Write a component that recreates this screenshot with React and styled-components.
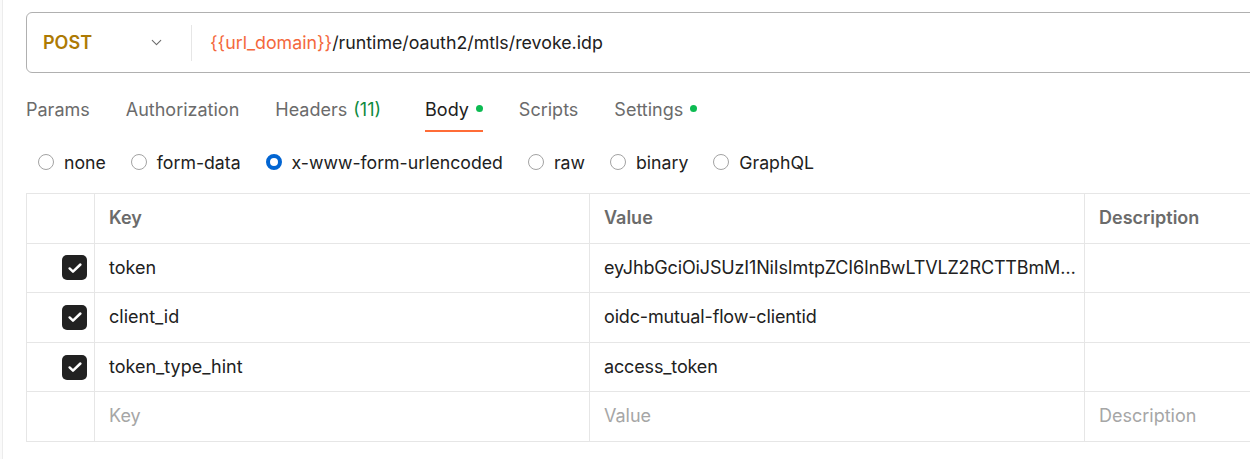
import React, { useState } from 'react';
import styled, { createGlobalStyle } from 'styled-components';
import { ChevronDown } from 'lucide-react';

const GlobalStyle = createGlobalStyle`
	html, body {
		margin: 0;
		padding: 0;
		background: #fafafa;
		font-family: Inter, "Noto Sans", sans-serif;
		overflow: hidden;
	}
`;

const tabs = [
	{ id: 'params', label: 'Params' },
	{ id: 'auth', label: 'Authorization' },
	{ id: 'headers', label: 'Headers', count: 11 },
	{ id: 'body', label: 'Body', dot: true },
	{ id: 'scripts', label: 'Scripts' },
	{ id: 'settings', label: 'Settings', dot: true }
];

const bodyTypes = ['none', 'form-data', 'x-www-form-urlencoded', 'raw', 'binary', 'GraphQL'];

const rows = [
	{ key: 'token', value: 'eyJhbGciOiJSUzI1NiIsImtpZCI6InBwLTVLZ2RCTTBmMjQ5OTYxNzE4YjQ1NjA' },
	{ key: 'client_id', value: 'oidc-mutual-flow-clientid' },
	{ key: 'token_type_hint', value: 'access_token' }
];

const CheckIcon = () => (
	<svg width="18" height="18" viewBox="0 0 16 16" fill="none">
		<path d="M3.2 8.4l3 2.9 6.6-6.4" stroke="#fff" strokeWidth="2.2" strokeLinecap="round" strokeLinejoin="round" />
	</svg>
);

/**
 * Request editor: method + url, tabs and the urlencoded body table
 */
const App = () => {
	const [activeTab, setActiveTab] = useState('body');
	const [bodyType, setBodyType] = useState('x-www-form-urlencoded');

	return (
		<Page>
			<GlobalStyle />
			<UrlBar>
				<MethodSelect>
					<Method>POST</Method>
					<ChevronDown size={17} strokeWidth={1.5} color="#6b6b6b" />
				</MethodSelect>
				<UrlDivider />
				<UrlText>
					<Variable>{'{{url_domain}}'}</Variable>/runtime/oauth2/mtls/revoke.idp
				</UrlText>
			</UrlBar>

			<TabList>
				{tabs.map((tab) => (
					<Tab key={tab.id} $active={activeTab === tab.id} onClick={() => setActiveTab(tab.id)}>
						{tab.label}
						{tab.count && <Count>({tab.count})</Count>}
						{tab.dot && <Dot />}
					</Tab>
				))}
			</TabList>

			<RadioRow>
				{bodyTypes.map((type) => (
					<RadioLabel key={type} onClick={() => setBodyType(type)}>
						<Radio $checked={bodyType === type} />
						{type}
					</RadioLabel>
				))}
			</RadioRow>

			<Table>
				<Row $header>
					<CheckCell />
					<Cell $width="495px">Key</Cell>
					<Cell $width="495px">Value</Cell>
					<Cell $width="300px">Description</Cell>
				</Row>
				{rows.map((row) => (
					<Row key={row.key}>
						<CheckCell>
							<Checkbox>
								<CheckIcon />
							</Checkbox>
						</CheckCell>
						<Cell $width="495px">{row.key}</Cell>
						<Cell $width="495px" $tight>{row.value}</Cell>
						<Cell $width="300px" />
					</Row>
				))}
				<Row>
					<CheckCell />
					<Cell $width="495px" $placeholder>Key</Cell>
					<Cell $width="495px" $placeholder>Value</Cell>
					<Cell $width="300px" $placeholder>Description</Cell>
				</Row>
			</Table>
		</Page>
	);
};

export default App;

const Page = styled.main`
	margin-left: 2px;
	min-height: 459px;
	box-sizing: border-box;
	border-left: 1px solid #ececec;
	background: #fff;
	padding: 12px 0 0 23px;
`;

const UrlBar = styled.div`
	display: flex;
	align-items: center;
	height: 61px;
	box-sizing: border-box;
	width: 1300px;
	border: 1px solid #b0b0b0;
	border-radius: 6px;
`;

const MethodSelect = styled.div`
	display: flex;
	align-items: center;
	justify-content: space-between;
	width: 122px;
	padding: 0 26px 0 16px;
`;

const Method = styled.span`
	font-size: 18px;
	font-weight: 600;
	color: #ad7a03;
`;

const UrlDivider = styled.div`
	width: 1px;
	height: 36px;
	background: #e6e6e6;
`;

const UrlText = styled.div`
	padding-left: 18px;
	font-size: 17.8px;
	color: #212121;
`;

const Variable = styled.span`
	color: #f4683c;
`;

const TabList = styled.nav`
	display: flex;
	gap: 36px;
	margin-top: 13px;
`;

const Tab = styled.div`
	display: flex;
	align-items: center;
	height: 46px;
	box-sizing: border-box;
	border-bottom: 2px solid ${(p) => (p.$active ? '#ff6c37' : 'transparent')};
	padding-top: 3px;
	font-size: 18px;
	color: ${(p) => (p.$active ? '#212121' : '#6b6b6b')};
	cursor: pointer;
`;

const Count = styled.span`
	margin: 0 8px 0 6px;
	color: #0f8a3f;
`;

const Dot = styled.span`
	width: 7px;
	height: 7px;
	margin-left: 7px;
	margin-bottom: 2px;
	border-radius: 50%;
	background: #0cbb52;
`;

const RadioRow = styled.div`
	display: flex;
	align-items: center;
	gap: 25px;
	height: 40px;
	margin-top: 10px;
	padding-left: 12px;
`;

const RadioLabel = styled.label`
	display: flex;
	align-items: center;
	gap: 10px;
	font-size: 17.7px;
	color: #212121;
	cursor: pointer;
`;

const Radio = styled.span`
	width: 16px;
	height: 16px;
	box-sizing: border-box;
	border-radius: 50%;
	border: ${(p) => (p.$checked ? '4px solid #0265d2' : '1px solid #a3a3a3')};
`;

const Table = styled.div`
	margin-top: 11px;
	width: 1400px;
	border-top: 1px solid #e6e6e6;
	border-left: 1px solid #e6e6e6;
`;

const Row = styled.div`
	display: flex;
	height: 49.6px;
	box-sizing: border-box;
	border-bottom: 1px solid #e6e6e6;
	font-size: 18px;
	font-weight: ${(p) => (p.$header ? 600 : 400)};
	color: ${(p) => (p.$header ? '#6b6b6b' : '#212121')};
`;

const CheckCell = styled.div`
	display: flex;
	flex-shrink: 0;
	align-items: center;
	justify-content: flex-end;
	width: 68px;
	padding-right: 7px;
	box-sizing: border-box;
	border-right: 1px solid #e6e6e6;
`;

const Checkbox = styled.span`
	display: flex;
	align-items: center;
	justify-content: center;
	width: 25px;
	height: 25px;
	border-radius: 5px;
	background: #212121;
`;

const Cell = styled.div`
	flex-shrink: 0;
	width: ${(p) => p.$width};
	box-sizing: border-box;
	padding: 0 5px 0 14px;
	border-right: 1px solid #e6e6e6;
	color: ${(p) => (p.$placeholder ? '#a6a6a6' : 'inherit')};
	letter-spacing: ${(p) => (p.$tight ? '-0.15px' : 'normal')};
	white-space: nowrap;
	overflow: hidden;
	text-overflow: ellipsis;
	line-height: 48.6px;
`;
